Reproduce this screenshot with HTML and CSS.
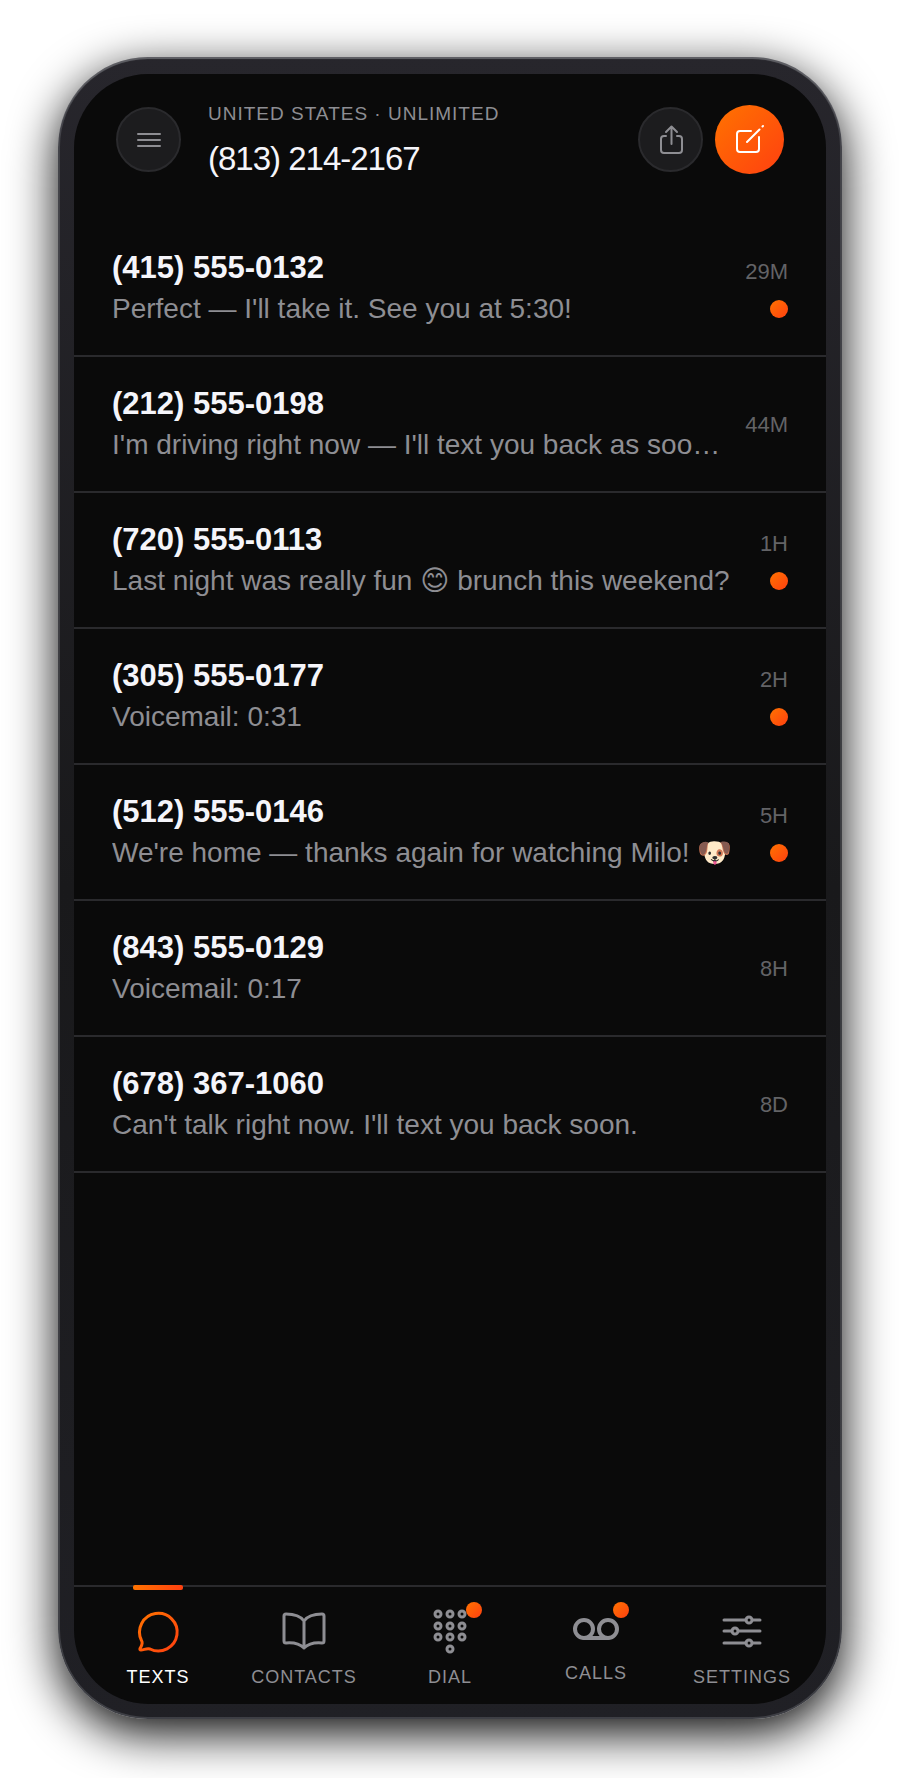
FILE: index.html
```
<!DOCTYPE html>
<html lang="en">
<head>
  <meta charset="UTF-8" />
  <meta name="viewport" content="width=device-width, initial-scale=1.0"/>
  <title>Texts</title>
  <link rel="stylesheet" href="styles.css">
</head>
<body>
  <div class="phone">
    <div class="screen">
      <header class="header">
        <button class="icon-btn" type="button" aria-label="Menu">
          <svg width="26" height="26" viewBox="0 0 26 26">
            <path d="M2 8h22M2 14h22M2 20h22"/>
          </svg>
        </button>
        <div class="line">
          <p class="line-plan">UNITED STATES · UNLIMITED</p>
          <h1>(813) 214-2167</h1>
        </div>
        <div class="actions">
          <button class="icon-btn" type="button" aria-label="Share">
            <svg width="30" height="34" viewBox="0 0 30 34">
              <path d="M10 14H8a3 3 0 0 0-3 3v11a3 3 0 0 0 3 3h15a3 3 0 0 0 3-3v-11a3 3 0 0 0-3-3h-2M15.500 22V5M10 10l5.500-5.500 5.500 5.500"/>
            </svg>
          </button>
          <button class="icon-btn compose" type="button" aria-label="New message">
            <svg width="34" height="34" viewBox="0 0 34 34">
              <path d="M18 9H7a3 3 0 0 0-3 3v15a3 3 0 0 0 3 3h16a3 3 0 0 0 3-3V15M14 20L26.500 7.500M29.500 4.500l.5-.5"/>
            </svg>
          </button>
        </div>
      </header>

      <main class="threads">
        <a class="thread" href="#">
          <div class="thread-text">
            <h2>(415) 555-0132</h2>
            <p>Perfect — I'll take it. See you at 5:30!</p>
          </div>
          <div class="thread-meta"><time>29M</time><span class="dot"></span></div>
        </a>
        <a class="thread" href="#">
          <div class="thread-text">
            <h2>(212) 555-0198</h2>
            <p>I'm driving right now — I'll text you back as soo…</p>
          </div>
          <div class="thread-meta"><time>44M</time></div>
        </a>
        <a class="thread" href="#">
          <div class="thread-text">
            <h2>(720) 555-0113</h2>
            <p>Last night was really fun 😊 brunch this weekend?</p>
          </div>
          <div class="thread-meta"><time>1H</time><span class="dot"></span></div>
        </a>
        <a class="thread" href="#">
          <div class="thread-text">
            <h2>(305) 555-0177</h2>
            <p>Voicemail: 0:31</p>
          </div>
          <div class="thread-meta"><time>2H</time><span class="dot"></span></div>
        </a>
        <a class="thread" href="#">
          <div class="thread-text">
            <h2>(512) 555-0146</h2>
            <p>We're home — thanks again for watching Milo! 🐶</p>
          </div>
          <div class="thread-meta"><time>5H</time><span class="dot"></span></div>
        </a>
        <a class="thread" href="#">
          <div class="thread-text">
            <h2>(843) 555-0129</h2>
            <p>Voicemail: 0:17</p>
          </div>
          <div class="thread-meta"><time>8H</time></div>
        </a>
        <a class="thread" href="#">
          <div class="thread-text">
            <h2>(678) 367-1060</h2>
            <p>Can't talk right now. I'll text you back soon.</p>
          </div>
          <div class="thread-meta"><time>8D</time></div>
        </a>
      </main>

      <nav class="tabs">
        <a class="tab active" href="#">
          <svg width="46" height="46" viewBox="0 0 46 46">
            <defs>
              <linearGradient id="flame" x1="0" y1="0" x2="1" y2="1">
                <stop offset="0" stop-color="#ff7300"/>
                <stop offset="1" stop-color="#ff4010"/>
              </linearGradient>
            </defs>
            <path stroke="url(#flame)" d="M6.500 31.500A18.800 18.800 0 1 1 15 40C11.500 39 9 41 6 41Q4.500 41 5 39.500C6 37.500 8.500 34.500 6.500 31.500Z"/>
          </svg>
          <span>TEXTS</span>
        </a>
        <a class="tab" href="#">
          <svg width="46" height="46" viewBox="0 0 46 46">
            <path d="M23 12Q18 5 5 5Q3 5 3 7V32Q3 34 5 34Q17 33 23 39Q29 33 41 34Q43 34 43 32V7Q43 5 41 5Q28 5 23 12V39"/>
          </svg>
          <span>CONTACTS</span>
        </a>
        <a class="tab" href="#">
          <div class="tab-icon">
            <svg width="46" height="46" viewBox="0 0 46 46">
              <circle cx="11" cy="5" r="3"/><circle cx="23" cy="5" r="3"/><circle cx="35" cy="5" r="3"/>
              <circle cx="11" cy="17" r="3"/><circle cx="23" cy="17" r="3"/><circle cx="35" cy="17" r="3"/>
              <circle cx="11" cy="28" r="3"/><circle cx="23" cy="28" r="3"/><circle cx="35" cy="28" r="3"/>
              <circle cx="23" cy="40" r="3"/>
            </svg>
            <i class="badge"></i>
          </div>
          <span>DIAL</span>
        </a>
        <a class="tab" href="#">
          <div class="tab-icon calls">
            <svg width="48" height="42" viewBox="0 0 48 42">
              <circle cx="12" cy="20" r="9"/><circle cx="36" cy="20" r="9"/><path d="M12 29h24"/>
            </svg>
            <i class="badge"></i>
          </div>
          <span>CALLS</span>
        </a>
        <a class="tab" href="#">
          <svg width="46" height="46" viewBox="0 0 46 46">
            <path d="M5 11h22M34 11h7M5 22h8M20 22h21M5 34h22M34 34h7"/>
            <circle cx="30" cy="11" r="3"/><circle cx="16" cy="22" r="3"/><circle cx="30" cy="34" r="3"/>
          </svg>
          <span>SETTINGS</span>
        </a>
      </nav>
    </div>
  </div>
</body>
</html>
```
FILE: styles.css
```
* {
  margin: 0;
  padding: 0;
  box-sizing: border-box;
  font-family: "Liberation Sans", "DejaVu Sans", sans-serif;
}
body {
  display: flex;
  min-height: 100vh;
  padding: 57px 58px 59px;
  background: #ffffff;
}
.phone {
  flex: 1;
  min-width: 0;
  display: flex;
  padding: 17px 16px 15px;
  border-radius: 90px;
  background: linear-gradient(180deg, #27262c 0%, #19191b 50%, #202025 100%);
  box-shadow: inset 0 0 0 2px rgba(120,122,128,0.35), inset 0 2px 1px rgba(255,255,255,0.2), 0 14px 48px rgba(0,0,0,0.98);
}
.screen {
  flex: 1;
  min-width: 0;
  display: flex;
  flex-direction: column;
  overflow: hidden;
  border-radius: 74px;
  background: #0a0a0a;
}
svg {
  display: block;
  fill: none;
  stroke: currentColor;
  stroke-width: 2;
  stroke-linecap: round;
  stroke-linejoin: round;
}
.header {
  display: flex;
  align-items: center;
  padding: 20px 42px 35px;
  color: #f5f5fa;
}
.icon-btn {
  display: grid;
  place-items: center;
  width: 65px;
  height: 65px;
  border: 2px solid #2a2a2d;
  border-radius: 50%;
  background: #1c1c1e;
  color: #8e8e93;
  cursor: pointer;
}
.icon-btn.compose {
  width: 69px;
  height: 69px;
  border: none;
  background: linear-gradient(135deg, #ff7300, #ff4010);
  color: white;
}
.line {
  flex: 1;
  margin-left: 27px;
}
.line-plan {
  font-size: 19px;
  line-height: 40px;
  letter-spacing: 1px;
  color: #8e8e93;
}
.line h1 {
  font-size: 33px;
  font-weight: 400;
  line-height: 50px;
  letter-spacing: -1px;
}
.actions {
  display: flex;
  align-items: center;
  gap: 12px;
}
.threads {
  flex: 1;
}
.thread {
  display: flex;
  align-items: center;
  gap: 24px;
  height: 136px;
  padding: 2px 38px 0;
  border-bottom: 2px solid #2a2a2d;
  text-decoration: none;
}
.thread:first-child {
  margin-top: 2px;
}
.thread-text {
  flex: 1;
  min-width: 0;
}
.thread h2 {
  font-size: 31px;
  font-weight: 700;
  line-height: 40px;
  color: #f5f5fa;
}
.thread p {
  overflow: hidden;
  font-size: 28px;
  line-height: 42px;
  white-space: nowrap;
  text-overflow: ellipsis;
  color: #8e8e93;
}
.thread-meta {
  display: flex;
  flex-direction: column;
  align-items: flex-end;
  gap: 16px;
}
.thread-meta time {
  font-size: 22px;
  line-height: 24px;
  color: #636366;
}
.dot, .badge {
  border-radius: 50%;
  background: linear-gradient(135deg, #ff7300, #ff4010);
}
.dot {
  width: 18px;
  height: 18px;
}
.tabs {
  display: flex;
  height: 119px;
  padding: 0 11px;
  border-top: 2px solid #2a2a2d;
}
.tab {
  position: relative;
  flex: 1;
  display: flex;
  flex-direction: column;
  align-items: center;
  gap: 12px;
  padding-top: 22px;
  font-size: 18px;
  line-height: 20px;
  letter-spacing: 1px;
  text-decoration: none;
  color: #8e8e93;
}
.tab svg {
  stroke-width: 3;
}
.tab .calls svg {
  stroke-width: 4;
}
.tab.active {
  color: white;
}
.tab.active::before {
  content: "";
  position: absolute;
  top: -2px;
  width: 50px;
  height: 5px;
  border-radius: 2px;
  background: linear-gradient(90deg, #ff7300, #ff4010);
}
.tab-icon {
  position: relative;
}
.badge {
  position: absolute;
  top: -7px;
  right: -9px;
  width: 16px;
  height: 16px;
}
```
